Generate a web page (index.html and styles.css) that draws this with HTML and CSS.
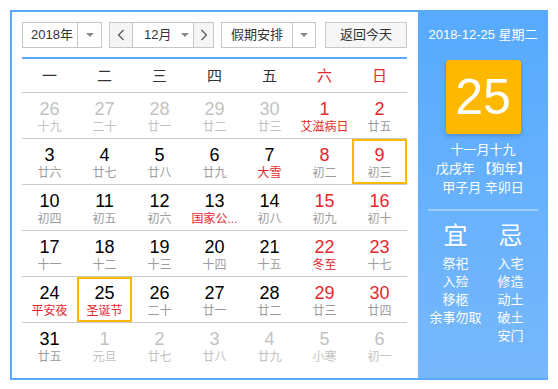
FILE: index.html
```html
<!DOCTYPE html>
<html lang="zh">
<head>
<meta charset="utf-8">
<title>万年历</title>
<link rel="stylesheet" href="styles.css">
</head>
<body>
<div class="cal">
  <div class="main">
    <div class="toolbar">
      <div class="select year"><span class="val">2018年</span><span class="arrow"><i class="tri"></i></span></div>
      <div class="month-group">
        <span class="nav"><svg width="8" height="12" viewBox="0 0 8 12"><polyline points="6.5,1 1.5,6 6.5,11" fill="none" stroke="#555" stroke-width="1.2"/></svg></span>
        <span class="mval"><span class="mtext">12月</span><i class="tri"></i></span>
        <span class="nav nav-r"><svg width="8" height="12" viewBox="0 0 8 12"><polyline points="1.5,1 6.5,6 1.5,11" fill="none" stroke="#555" stroke-width="1.2"/></svg></span>
      </div>
      <div class="select holiday"><span class="val">假期安排</span><span class="arrow"><i class="tri"></i></span></div>
      <div class="today">返回今天</div>
    </div>
    <div class="week">
      <span>一</span><span>二</span><span>三</span><span>四</span><span>五</span><span class="red">六</span><span class="red">日</span>
    </div>
    <div class="grid">
      <div class="cell other"><div class="n">26</div><div class="l">十九</div></div>
      <div class="cell other"><div class="n">27</div><div class="l">二十</div></div>
      <div class="cell other"><div class="n">28</div><div class="l">廿一</div></div>
      <div class="cell other"><div class="n">29</div><div class="l">廿二</div></div>
      <div class="cell other"><div class="n">30</div><div class="l">廿三</div></div>
      <div class="cell wk"><div class="n">1</div><div class="l fest">艾滋病日</div></div>
      <div class="cell wk"><div class="n">2</div><div class="l">廿五</div></div>

      <div class="cell"><div class="n">3</div><div class="l">廿六</div></div>
      <div class="cell"><div class="n">4</div><div class="l">廿七</div></div>
      <div class="cell"><div class="n">5</div><div class="l">廿八</div></div>
      <div class="cell"><div class="n">6</div><div class="l">廿九</div></div>
      <div class="cell"><div class="n">7</div><div class="l fest">大雪</div></div>
      <div class="cell wk"><div class="n">8</div><div class="l">初二</div></div>
      <div class="cell wk boxed"><div class="n">9</div><div class="l">初三</div></div>

      <div class="cell"><div class="n">10</div><div class="l">初四</div></div>
      <div class="cell"><div class="n">11</div><div class="l">初五</div></div>
      <div class="cell"><div class="n">12</div><div class="l">初六</div></div>
      <div class="cell"><div class="n">13</div><div class="l fest" title="国家公祭日">国家公...</div></div>
      <div class="cell"><div class="n">14</div><div class="l">初八</div></div>
      <div class="cell wk"><div class="n">15</div><div class="l">初九</div></div>
      <div class="cell wk"><div class="n">16</div><div class="l">初十</div></div>

      <div class="cell"><div class="n">17</div><div class="l">十一</div></div>
      <div class="cell"><div class="n">18</div><div class="l">十二</div></div>
      <div class="cell"><div class="n">19</div><div class="l">十三</div></div>
      <div class="cell"><div class="n">20</div><div class="l">十四</div></div>
      <div class="cell"><div class="n">21</div><div class="l">十五</div></div>
      <div class="cell wk"><div class="n">22</div><div class="l fest">冬至</div></div>
      <div class="cell wk"><div class="n">23</div><div class="l">十七</div></div>

      <div class="cell"><div class="n">24</div><div class="l fest">平安夜</div></div>
      <div class="cell boxed"><div class="n">25</div><div class="l fest">圣诞节</div></div>
      <div class="cell"><div class="n">26</div><div class="l">二十</div></div>
      <div class="cell"><div class="n">27</div><div class="l">廿一</div></div>
      <div class="cell"><div class="n">28</div><div class="l">廿二</div></div>
      <div class="cell wk"><div class="n">29</div><div class="l">廿三</div></div>
      <div class="cell wk"><div class="n">30</div><div class="l">廿四</div></div>

      <div class="cell"><div class="n">31</div><div class="l">廿五</div></div>
      <div class="cell other"><div class="n">1</div><div class="l">元旦</div></div>
      <div class="cell other"><div class="n">2</div><div class="l">廿七</div></div>
      <div class="cell other"><div class="n">3</div><div class="l">廿八</div></div>
      <div class="cell other"><div class="n">4</div><div class="l">廿九</div></div>
      <div class="cell other"><div class="n">5</div><div class="l">小寒</div></div>
      <div class="cell other"><div class="n">6</div><div class="l">初一</div></div>
    </div>
  </div>
  <div class="side">
    <div class="date">2018-12-25 星期二</div>
    <div class="big">25</div>
    <div class="lunar">
      <div>十一月十九</div>
      <div>戊戌年 【狗年】</div>
      <div>甲子月 辛卯日</div>
    </div>
    <div class="divider"></div>
    <div class="yj">
      <div class="col">
        <div class="head">宜</div>
        <div class="item">祭祀</div>
        <div class="item">入殓</div>
        <div class="item">移柩</div>
        <div class="item">余事勿取</div>
      </div>
      <div class="col">
        <div class="head">忌</div>
        <div class="item">入宅</div>
        <div class="item">修造</div>
        <div class="item">动土</div>
        <div class="item">破土</div>
        <div class="item">安门</div>
      </div>
    </div>
  </div>
</div>
</body>
</html>
```
FILE: styles.css
```css
* { box-sizing: border-box; }
body {
  margin: 0;
  background: #fff;
  font-family: "Liberation Sans", "Noto Sans CJK SC", sans-serif;
  color: #333;
}
.cal {
  margin: 10px 0 0 10px;
  width: 538px;
  height: 370px;
  border: 2px solid #5aa9fd;
  border-right: 0;
  display: flex;
}
.main {
  width: 406px;
  padding: 10px 11px 0 10px;
}
.toolbar {
  display: flex;
  height: 26px;
  margin-bottom: 9px;
  font-size: 13px;
}
.select {
  display: flex;
  border: 1px solid #c6c6c6;
  background: #fff;
}
.year { width: 80px; margin-right: 7px; }
.year .val { width: 54px; padding-left: 8px; }
.holiday { width: 95px; margin-right: 9px; }
.holiday .val { width: 70px; text-align: center; }
.val { line-height: 24px; white-space: nowrap; }
.arrow {
  flex: 1;
  border-left: 1px solid #c6c6c6;
  display: flex;
  align-items: center;
  justify-content: center;
}
.tri {
  display: block;
  width: 0;
  height: 0;
  border-left: 4px solid transparent;
  border-right: 4px solid transparent;
  border-top: 4px solid #8a8a8a;
}
.month-group {
  width: 105px;
  margin-right: 7px;
  display: flex;
  border: 1px solid #c6c6c6;
}
.nav {
  width: 23px;
  background: #f5f5f5;
  border-right: 1px solid #c6c6c6;
  display: flex;
  align-items: center;
  justify-content: center;
}
.nav-r { border-right: 0; border-left: 1px solid #c6c6c6; flex: 1; }
.mval {
  width: 60px;
  display: flex;
  align-items: center;
  padding-left: 11px;
}
.mtext { line-height: 24px; margin-right: 10px; }
.today {
  width: 82px;
  border: 1px solid #c9c9c9;
  background: #f6f6f6;
  text-align: center;
  line-height: 24px;
}
.week {
  display: grid;
  grid-template-columns: repeat(7, 55px);
  border-top: 2px solid #5aa9fd;
  border-bottom: 1px solid #cbcbcb;
  height: 36px;
  line-height: 33px;
  font-size: 15px;
  text-align: center;
  color: #333;
}
.red { color: #e5272e; }
.grid {
  display: grid;
  grid-template-columns: repeat(7, 55px);
}
.cell {
  height: 46px;
  border-bottom: 1px solid #cbcbcb;
  text-align: center;
  padding-top: 5px;
}
.cell:nth-last-child(-n+7) { border-bottom: 0; }
.n {
  font-size: 18px;
  line-height: 22px;
  color: #000;
}
.l {
  font-size: 12px;
  line-height: 14px;
  color: #9c9c9c;
  white-space: nowrap;
}
.wk .n { color: #e5272e; }
.fest { color: #e5272e; }
.other .n, .other .l { color: #c2c2c2; }
.boxed { box-shadow: inset 0 0 0 2px #ffb800; }
.side {
  width: 130px;
  background: linear-gradient(#57aafe, #77b8fb);
  color: #fff;
  text-align: center;
  display: flex;
  flex-direction: column;
  align-items: center;
}
.date {
  padding-top: 13px;
  font-size: 13px;
  line-height: 20px;
  white-space: nowrap;
}
.big {
  width: 75px;
  height: 74px;
  margin-top: 15px;
  background: #ffb800;
  border-radius: 3px;
  box-shadow: 0 2px 4px rgba(0, 0, 0, 0.2);
  font-size: 50px;
  line-height: 74px;
}
.lunar {
  margin-top: 6px;
  font-size: 13px;
  line-height: 19px;
  white-space: nowrap;
}
.divider {
  width: 110px;
  height: 2px;
  margin-top: 12px;
  background: rgba(255, 255, 255, 0.35);
}
.yj {
  display: flex;
  margin-top: 10px;
}
.col { width: 55px; }
.head {
  font-size: 24px;
  line-height: 30px;
  margin-bottom: 4px;
}
.item {
  font-size: 13px;
  line-height: 18px;
  white-space: nowrap;
}
```
